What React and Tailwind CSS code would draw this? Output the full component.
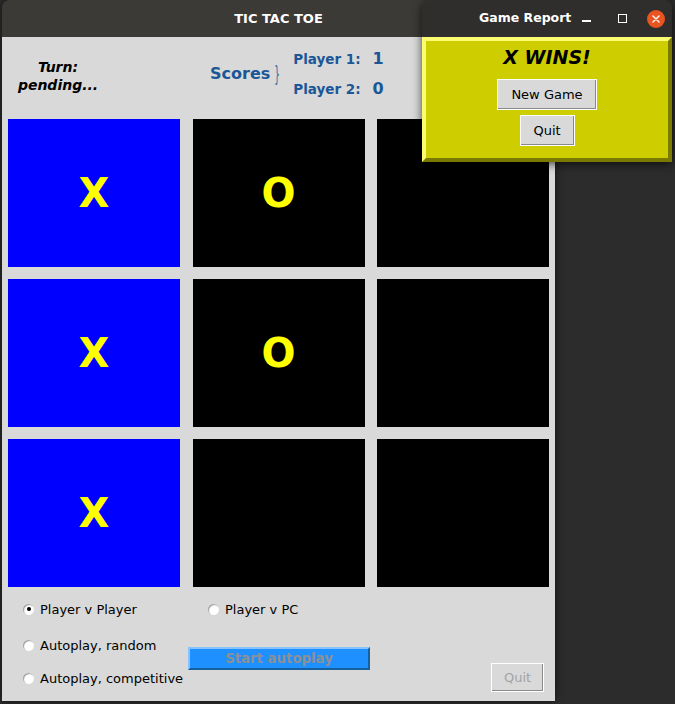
import React from 'react';

const board = ['X', 'O', '', 'X', 'O', '', 'X', '', ''];

const Radio = ({ label, checked }) => (
  <div className="flex items-center gap-[6px] h-[20px]">
    <span className="relative w-[11px] h-[11px] rounded-full bg-white shadow-[inset_1px_1px_1px_#9a9a9a] flex items-center justify-center">
      {checked && <span className="w-[4px] h-[4px] rounded-full bg-black" />}
    </span>
    <span className="text-[13px] text-black leading-none">{label}</span>
  </div>
);

const TkButton = ({ children, className = '', muted }) => (
  <button
    className={`bg-[#d9d9d9] border border-white shadow-[inset_-1px_-1px_0_#8a8a8a] text-[13px] leading-none ${muted ? 'text-[#a3a3a3]' : 'text-black'} ${className}`}
  >
    {children}
  </button>
);

const Cell = ({ value, index }) => {
  const col = index % 3;
  const bg = col === 0 && value ? 'bg-[#0000ff]' : 'bg-black';
  return (
    <div className={`${bg} h-[148px] flex items-center justify-center`}>
      <span className="text-[40px] font-bold text-[#ffff00] leading-none">{value}</span>
    </div>
  );
};

const MainWindow = () => (
  <div className="absolute left-[2px] top-0 w-[553px] h-[701px] rounded-t-[8px] overflow-hidden flex flex-col shadow-[0_0_10px_rgba(0,0,0,0.6)]">
    {/* title bar */}
    <div className="h-[37px] bg-[#3b3a36] flex items-center justify-center">
      <span className="text-white font-bold text-[13px]">TIC TAC TOE</span>
    </div>

    <div className="flex-1 bg-[#d9d9d9] flex flex-col">
      {/* header */}
      <div className="h-[82px] pb-[8px] flex items-center">
        <div className="w-[112px] mt-[3px] text-center font-bold italic text-[14px] leading-[18px] text-black">
          <div>Turn:</div>
          <div>pending...</div>
        </div>
        <div className="ml-[96px] flex items-center">
          <span className="text-[16px] font-bold text-[#1b5797]">Scores</span>
          <span className="text-[22px] font-normal text-[#2a64a4] scale-x-[0.4] inline-block leading-none">{'}'}</span>
          <div className="ml-[9px] grid grid-cols-[auto_auto] gap-x-[12px] text-[#1b5797] font-bold">
            <span className="h-[30px] flex items-center text-[13.5px]">Player 1:</span>
            <span className="h-[30px] flex items-center text-[16px]">1</span>
            <span className="h-[30px] flex items-center text-[13.5px]">Player 2:</span>
            <span className="h-[30px] flex items-center text-[16px]">0</span>
          </div>
        </div>
      </div>

      {/* board */}
      <div className="px-[6px] grid grid-cols-[172px_172px_172px] gap-x-[12.5px] gap-y-[12px]">
        {board.map((v, i) => (
          <Cell key={i} value={v} index={i} />
        ))}
      </div>

      {/* controls */}
      <div className="flex pl-[21px] pr-[11px]">
        <div className="w-[165px] flex flex-col">
          <div className="mt-[12px]"><Radio label="Player v Player" checked /></div>
          <div className="mt-[16px]"><Radio label="Autoplay, random" /></div>
          <div className="mt-[13px]"><Radio label="Autoplay, competitive" /></div>
        </div>
        <div className="flex flex-col">
          <div className="mt-[12px] ml-[20px]"><Radio label="Player v PC" /></div>
          <button className="mt-[28px] w-[182px] h-[23px] bg-[#1e90ff] border-2 border-t-[#86c2ff] border-l-[#86c2ff] border-r-[#15609f] border-b-[#15609f] text-[13.3px] font-bold text-[#8c9096] leading-none">
            Start autoplay
          </button>
        </div>
        <div className="ml-auto">
          <TkButton muted className="mt-[76px] w-[53px] h-[29px]">Quit</TkButton>
        </div>
      </div>
    </div>
  </div>
);

const ReportWindow = () => (
  <div className="absolute left-[422px] top-0 w-[250px] h-[162px] rounded-t-[8px] overflow-hidden flex flex-col shadow-[0_2px_10px_rgba(0,0,0,0.7)]">
    <div className="h-[37px] bg-[#2f2e2c] flex items-center">
      <span className="ml-[57px] text-white font-bold text-[12.5px]">Game Report</span>
      <span className="ml-[11px] w-[9px] h-[2px] bg-white mt-[4px]" />
      <span className="ml-[27px] w-[9px] h-[9px] border-[1.5px] border-white" />
      <span className="ml-[20px] w-[18px] h-[18px] rounded-full bg-[#e95420] flex items-center justify-center">
        <svg width="8" height="8" viewBox="0 0 8 8">
          <path d="M1 1 L7 7 M7 1 L1 7" stroke="white" strokeWidth="1.4" strokeLinecap="round" />
        </svg>
      </span>
    </div>
    <div className="flex-1 bg-[#cdcd00] border-4 border-t-[#fcfc72] border-l-[#fcfc72] border-r-[#7a7a00] border-b-[#7a7a00] flex flex-col items-center">
      <span className="mt-[4px] text-[19px] font-bold italic text-black leading-[24px]">X WINS!</span>
      <TkButton className="mt-[10px] w-[100px] h-[31px]">New Game</TkButton>
      <TkButton className="mt-[5px] w-[55px] h-[31px]">Quit</TkButton>
    </div>
  </div>
);

export default function App() {
  return (
    <div className="relative w-[675px] h-[704px] bg-[#2c2c2c] overflow-hidden font-['DejaVu_Sans',sans-serif]">
      <MainWindow />
      <ReportWindow />
    </div>
  );
}
